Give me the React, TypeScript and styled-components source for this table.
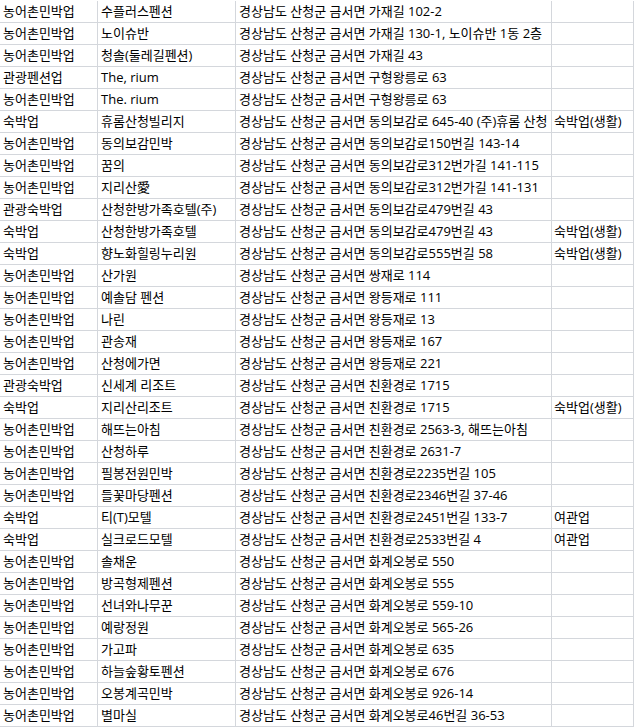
import React from 'react'
import styled, { createGlobalStyle } from 'styled-components'

type Row = [string, string, string, string?]

const PREFIX = '경상남도 산청군 금서면 '

const rows: Row[] = [
  ['농어촌민박업', '수플러스펜션', '가재길 102-2'],
  ['농어촌민박업', '노이슈반', '가재길 130-1, 노이슈반 1동 2층'],
  ['농어촌민박업', '청솔(둘레길펜션)', '가재길 43'],
  ['관광펜션업', 'The, rium', '구형왕릉로 63'],
  ['농어촌민박업', 'The. rium', '구형왕릉로 63'],
  ['숙박업', '휴롬산청빌리지', '동의보감로 645-40 (주)휴롬 산청', '숙박업(생활)'],
  ['농어촌민박업', '동의보감민박', '동의보감로150번길 143-14'],
  ['농어촌민박업', '꿈의', '동의보감로312번가길 141-115'],
  ['농어촌민박업', '지리산愛', '동의보감로312번가길 141-131'],
  ['관광숙박업', '산청한방가족호텔(주)', '동의보감로479번길 43'],
  ['숙박업', '산청한방가족호텔', '동의보감로479번길 43', '숙박업(생활)'],
  ['숙박업', '향노화힐링누리원', '동의보감로555번길 58', '숙박업(생활)'],
  ['농어촌민박업', '산가원', '쌍재로 114'],
  ['농어촌민박업', '예솔담 펜션', '왕등재로 111'],
  ['농어촌민박업', '나린', '왕등재로 13'],
  ['농어촌민박업', '관송재', '왕등재로 167'],
  ['농어촌민박업', '산청에가면', '왕등재로 221'],
  ['관광숙박업', '신세계 리조트', '친환경로 1715'],
  ['숙박업', '지리산리조트', '친환경로 1715', '숙박업(생활)'],
  ['농어촌민박업', '해뜨는아침', '친환경로 2563-3, 해뜨는아침'],
  ['농어촌민박업', '산청하루', '친환경로 2631-7'],
  ['농어촌민박업', '필봉전원민박', '친환경로2235번길 105'],
  ['농어촌민박업', '들꽃마당펜션', '친환경로2346번길 37-46'],
  ['숙박업', '티(T)모텔', '친환경로2451번길 133-7', '여관업'],
  ['숙박업', '실크로드모텔', '친환경로2533번길 4', '여관업'],
  ['농어촌민박업', '솔채운', '화계오봉로 550'],
  ['농어촌민박업', '방곡형제펜션', '화계오봉로 555'],
  ['농어촌민박업', '선녀와나무꾼', '화계오봉로 559-10'],
  ['농어촌민박업', '예랑정원', '화계오봉로 565-26'],
  ['농어촌민박업', '가고파', '화계오봉로 635'],
  ['농어촌민박업', '하늘숲황토펜션', '화계오봉로 676'],
  ['농어촌민박업', '오봉계곡민박', '화계오봉로 926-14'],
  ['농어촌민박업', '별마실', '화계오봉로46번길 36-53'],
]

const colWidths = [98, 138, 316, 82]

export default function App() {
  return (
    <>
      <GlobalStyle />
      <Sheet>
        <Table>
          <colgroup>
            {colWidths.map((w, i) => (
              <col key={i} style={{ width: w }} />
            ))}
          </colgroup>
          <tbody>
            {rows.map(([kind, name, addr, sub], i) => (
              <tr key={i}>
                <Cell>{kind}</Cell>
                <Cell>{name}</Cell>
                <Cell>{PREFIX + addr}</Cell>
                <Cell $tight>{sub ?? ''}</Cell>
              </tr>
            ))}
          </tbody>
        </Table>
      </Sheet>
    </>
  )
}

const GlobalStyle = createGlobalStyle`
  html, body { margin: 0; padding: 0; background: #fff; }
  body {
    font-family: "Open Sans", "Noto Sans CJK KR", sans-serif;
    color: #000;
  }
`

const Sheet = styled.div`
  width: 634px;
  padding-top: 1px;
  overflow: hidden;
`

const Table = styled.table`
  table-layout: fixed;
  border-collapse: separate;
  border-spacing: 0;
  width: 634px;
`

const Cell = styled.td<{ $tight?: boolean }>`
  box-sizing: border-box;
  height: 22px;
  padding: 0 0 0 ${(p) => (p.$tight ? '2px' : '3px')};
  border-right: 1px solid #d4d7dc;
  border-bottom: 1px solid #d4d7dc;
  font-size: 13px;
  line-height: 21px;
  white-space: nowrap;
  overflow: hidden;
  vertical-align: middle;
`
